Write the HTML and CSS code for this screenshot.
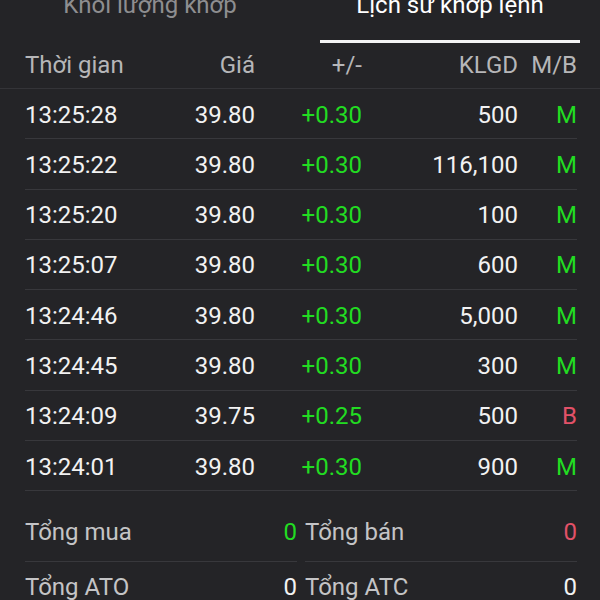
FILE: index.html
```html
<!DOCTYPE html>
<html lang="vi">
<head>
    <meta charset="UTF-8">
    <meta name="viewport" content="width=device-width, initial-scale=1.0">
    <title>Lịch sử khớp lệnh</title>
    <link rel="stylesheet" href="styles.css">
</head>
<body>

<div class="tabs">
    <div class="tab">Khối lượng khớp</div>
    <div class="tab active">Lịch sử khớp lệnh</div>
</div>

<div class="head">
    <div class="cols">
        <span>Thời gian</span>
        <span class="r">Giá</span>
        <span class="r">+/-</span>
        <span class="r">KLGD</span>
        <span class="r">M/B</span>
    </div>
</div>

<div class="list">
    <div class="cols row"><span>13:25:28</span><span class="r">39.80</span><span class="r up">+0.30</span><span class="r">500</span><span class="r up">M</span></div>
    <div class="cols row"><span>13:25:22</span><span class="r">39.80</span><span class="r up">+0.30</span><span class="r">116,100</span><span class="r up">M</span></div>
    <div class="cols row"><span>13:25:20</span><span class="r">39.80</span><span class="r up">+0.30</span><span class="r">100</span><span class="r up">M</span></div>
    <div class="cols row"><span>13:25:07</span><span class="r">39.80</span><span class="r up">+0.30</span><span class="r">600</span><span class="r up">M</span></div>
    <div class="cols row"><span>13:24:46</span><span class="r">39.80</span><span class="r up">+0.30</span><span class="r">5,000</span><span class="r up">M</span></div>
    <div class="cols row"><span>13:24:45</span><span class="r">39.80</span><span class="r up">+0.30</span><span class="r">300</span><span class="r up">M</span></div>
    <div class="cols row"><span>13:24:09</span><span class="r">39.75</span><span class="r up">+0.25</span><span class="r">500</span><span class="r down">B</span></div>
    <div class="cols row"><span>13:24:01</span><span class="r">39.80</span><span class="r up">+0.30</span><span class="r">900</span><span class="r up">M</span></div>
</div>

<div class="summary">
    <div class="sum"><span class="label">Tổng mua</span><span class="up">0</span></div>
    <div class="sum"><span class="label">Tổng bán</span><span class="down">0</span></div>
    <div class="sum"><span class="label">Tổng ATO</span><span>0</span></div>
    <div class="sum"><span class="label">Tổng ATC</span><span>0</span></div>
</div>

</body>
</html>
```

FILE: styles.css
```css
/* Bảng lịch sử khớp lệnh */
html, body {
    overflow: hidden;
}
body {
    margin: 0;
    background-color: #242427;
    color: #f2f2f2;
    font-family: Roboto, "Noto Sans", sans-serif;
    font-size: 24px;
    line-height: 28px;
}
.tabs {
    display: flex;
    margin-top: -9px;
}
.tab {
    flex: 1;
    margin: 0 20px;
    padding-bottom: 21px;
    text-align: center;
    color: #8e8e90;
    border-bottom: 3px solid transparent;
}
.tab.active {
    color: #fff;
    border-bottom-color: #f4f4f4;
}
.head {
    padding: 8px 0 9px;
    color: #b6b6b8;
    border-bottom: 1px solid #343438;
}
.cols {
    display: grid;
    grid-template-columns: 120px 110px 107px 156px 59px;
    margin: 0 23px 0 25px;
}
.r {
    text-align: right;
}
.row {
    padding: 11.5px 0 9.8px;
    border-bottom: 1px solid #38383c;
}
.up {
    color: #22dc22;
}
.down {
    color: #e25168;
}
.summary {
    display: grid;
    grid-template-columns: 1fr 1fr;
    column-gap: 8px;
    margin: 16px 23px 0 25px;
}
.sum {
    display: flex;
    justify-content: space-between;
    padding: 11px 0 15px;
    border-bottom: 1px solid #38383c;
}
.label {
    color: #c4c4c6;
}
```
